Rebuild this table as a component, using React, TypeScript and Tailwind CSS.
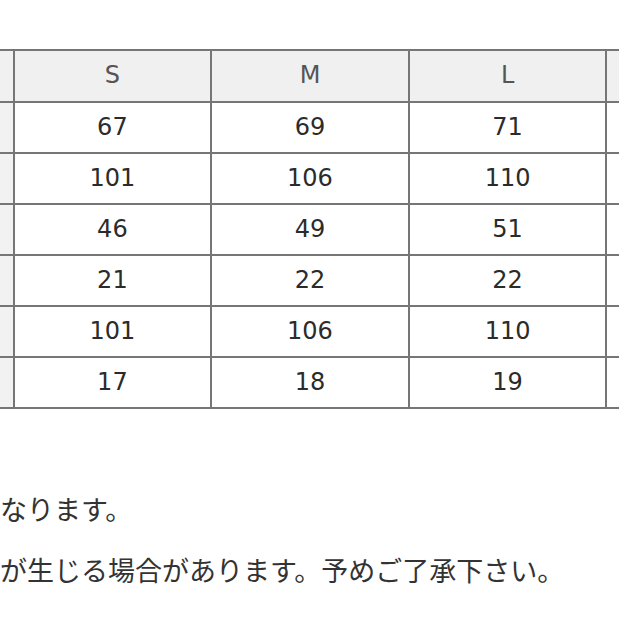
const sizes = ["", "S", "M", "L", ""];

const rows = [
  ["", "67", "69", "71", ""],
  ["", "101", "106", "110", ""],
  ["", "46", "49", "51", ""],
  ["", "21", "22", "22", ""],
  ["", "101", "106", "110", ""],
  ["", "17", "18", "19", ""],
];

const jp = { fontFamily: '"Noto Sans CJK JP", "Noto Sans", sans-serif' };
const num = { fontFamily: '"DejaVu Sans", "Noto Sans", sans-serif' };

export default function App() {
  return (
    <div className="w-[619px] h-[619px] bg-white overflow-hidden text-[#333]">
      <div className="pt-[49px] ml-[-185px]" style={num}>
        <table className="border-collapse table-fixed w-[990px]">
          <thead>
            <tr className="h-[52px]">
              {sizes.map((s, i) => (
                <th
                  key={i}
                  className="w-[197px] border-2 border-[#767676] bg-[#f0f0f0] pb-[2px] text-[24px] font-normal text-[#555] text-center"
                >
                  {s}
                </th>
              ))}
            </tr>
          </thead>
          <tbody>
            {rows.map((r, ri) => (
              <tr key={ri} className="h-[51px]">
                {r.map((v, ci) => (
                  <td
                    key={ci}
                    className={
                      ci === 0
                        ? "border-2 border-[#767676] bg-[#f2f2f2] pb-[1px] text-center text-[24px]"
                        : "border-2 border-[#767676] bg-white pb-[1px] text-center text-[24px] text-[#2b2b2b]"
                    }
                  >
                    {v}
                  </td>
                ))}
              </tr>
            ))}
          </tbody>
        </table>
      </div>
      <div className="mt-[84px] text-[27px] leading-[32px] text-[#333] whitespace-nowrap" style={jp}>
        <p>なります。</p>
        <p className="mt-[29px]">が生じる場合があります。予めご了承下さい。</p>
      </div>
    </div>
  );
}
